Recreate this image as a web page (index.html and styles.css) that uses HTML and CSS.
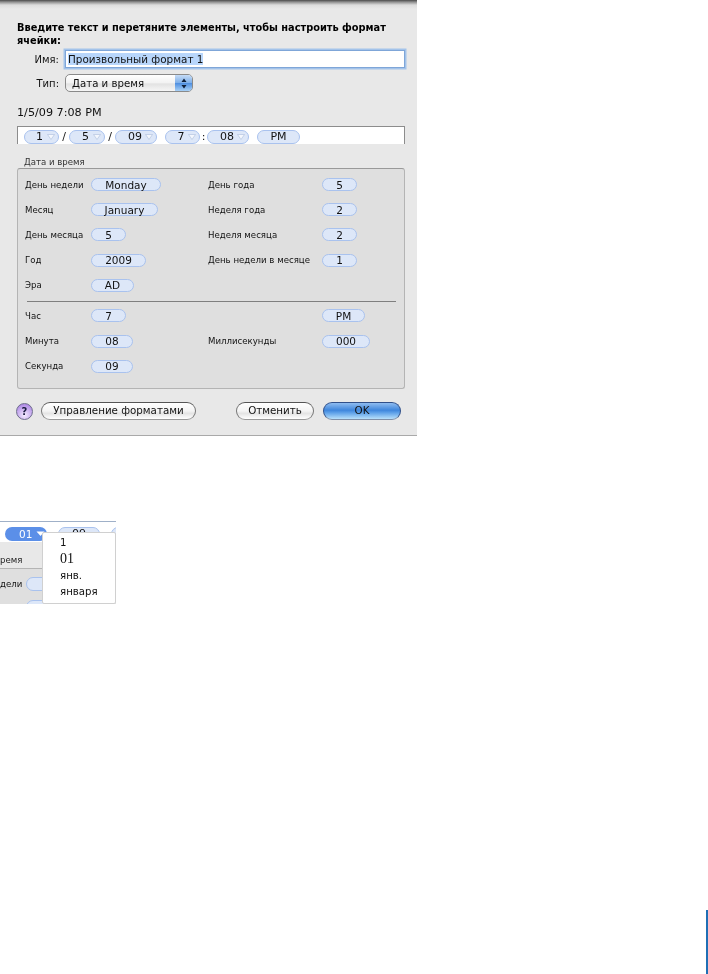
FILE: index.html
```html
<!DOCTYPE html>
<html lang="ru">
<head>
<meta charset="utf-8">
<title>Произвольный формат</title>
<link rel="stylesheet" href="styles.css">
</head>
<body>
<main class="page">
  <section class="dialog">
    <h1 class="heading">Введите текст и перетяните элементы, чтобы настроить формат ячейки:</h1>
    <div class="form-row name-row">
      <span class="form-label">Имя:</span>
      <div class="input"><span class="selected">Произвольный формат 1</span></div>
    </div>
    <div class="form-row type-row">
      <span class="form-label">Тип:</span>
      <div class="select">
        <span class="select-text">Дата и время</span>
        <span class="select-arrows">
          <svg width="12" height="15" viewBox="0 0 12 15"><path d="M6 2.5 8.5 6h-5zM6 12.5 3.5 9h5z" fill="#10203a"/></svg>
        </span>
      </div>
    </div>
    <p class="sample">1/5/09 7:08 PM</p>
    <div class="tokens">
      <span class="token t1 p4">1<svg class="chev" width="8" height="6" viewBox="0 0 8 6"><path d="M.5.5h7L4 5.5z" fill="#f4f7fd" stroke="#b4c4e0" stroke-width=".7"/></svg></span>
      <span class="sep">/</span>
      <span class="token t1 p2">5<svg class="chev" width="8" height="6" viewBox="0 0 8 6"><path d="M.5.5h7L4 5.5z" fill="#f4f7fd" stroke="#b4c4e0" stroke-width=".7"/></svg></span>
      <span class="sep">/</span>
      <span class="token t2">09<svg class="chev" width="8" height="6" viewBox="0 0 8 6"><path d="M.5.5h7L4 5.5z" fill="#f4f7fd" stroke="#b4c4e0" stroke-width=".7"/></svg></span>
      <span class="token t1 gap-left">7<svg class="chev" width="8" height="6" viewBox="0 0 8 6"><path d="M.5.5h7L4 5.5z" fill="#f4f7fd" stroke="#b4c4e0" stroke-width=".7"/></svg></span>
      <span class="sep sep-colon">:</span>
      <span class="token t2">08<svg class="chev" width="8" height="6" viewBox="0 0 8 6"><path d="M.5.5h7L4 5.5z" fill="#f4f7fd" stroke="#b4c4e0" stroke-width=".7"/></svg></span>
      <span class="token t3 gap-left">PM</span>
    </div>
    <h2 class="group-title">Дата и время</h2>
    <div class="panel">
      <div class="grid">
        <span class="label">День недели</span><span><span class="pill w70">Monday</span></span>
        <span class="label">День года</span><span><span class="pill w35">5</span></span>
        <span class="label">Месяц</span><span><span class="pill w67">January</span></span>
        <span class="label">Неделя года</span><span><span class="pill w35">2</span></span>
        <span class="label">День месяца</span><span><span class="pill w35">5</span></span>
        <span class="label">Неделя месяца</span><span><span class="pill w35">2</span></span>
        <span class="label">Год</span><span><span class="pill w55">2009</span></span>
        <span class="label">День недели в месяце</span><span><span class="pill w35">1</span></span>
        <span class="label">Эра</span><span><span class="pill w43">AD</span></span>
        <span></span><span></span>
      </div>
      <hr class="divider">
      <div class="grid">
        <span class="label">Час</span><span><span class="pill w35">7</span></span>
        <span class="label"></span><span><span class="pill w43">PM</span></span>
        <span class="label">Минута</span><span><span class="pill w42">08</span></span>
        <span class="label">Миллисекунды</span><span><span class="pill w48">000</span></span>
        <span class="label">Секунда</span><span><span class="pill w42">09</span></span>
        <span></span><span></span>
      </div>
    </div>
    <div class="actions">
      <span class="help">?</span>
      <button class="btn manage">Управление форматами</button>
      <span class="spacer"></span>
      <button class="btn cancel">Отменить</button>
      <button class="btn ok">OK</button>
    </div>
  </section>
  <figure class="crop">
    <div class="crop-strip">
      <span class="token-active">01<svg width="9" height="6" viewBox="0 0 9 6"><path d="M.5.5h8L4.5 5z" fill="#fff"/></svg></span>
      <span class="token crop-next">09</span>
      <span class="token crop-last"></span>
    </div>
    <div class="crop-body">
      <span class="crop-title">ремя</span>
      <div class="crop-row"><span class="crop-label">дели</span><span class="crop-pill"></span></div>
      <span class="crop-pill crop-pill2"></span>
    </div>
    <ul class="menu">
      <li>1</li>
      <li class="menu-big">01</li>
      <li>янв.</li>
      <li>января</li>
    </ul>
  </figure>
  <div class="page-rule"></div>
</main>
</body>
</html>
```
FILE: styles.css
```css
* { box-sizing: border-box; }
html, body { margin: 0; padding: 0; background: #fff; }
body { width: 708px; height: 974px; overflow: hidden; }
.page {
  position: relative;
  width: 708px;
  height: 974px;
  font-family: "DejaVu Sans", sans-serif;
  color: #111;
}
.dialog {
  width: 417px;
  height: 436px;
  background: linear-gradient(#4a4a4a 0, #8f8f8f 2px, #dcdcdc 5px, #e8e8e8 9px);
  border-bottom: 1px solid #a9a9a9;
  padding: 21px 12px 0 17px;
  display: flex;
  flex-direction: column;
  filter: blur(.35px);
}
.heading {
  margin: 0;
  font-size: 9.8px;
  line-height: 13px;
  font-weight: 700;
  color: #000;
}
.form-row { display: flex; align-items: center; }
.form-label {
  width: 42px;
  text-align: right;
  font-size: 10px;
  margin-right: 6px;
  color: #111;
}
.name-row { margin-top: 3px; height: 18px; }
.input {
  width: 340px;
  height: 18px;
  background: #fff;
  border: 1px solid #7fa6d8;
  box-shadow: 0 0 0 1.5px #a3c3ea;
  padding: 0 2px;
  font-size: 10.4px;
  line-height: 16px;
}
.selected { background: #b8d6fb; }
.type-row { margin-top: 6px; height: 18px; }
.select {
  width: 128px;
  height: 18px;
  border: 1px solid #8a8a8a;
  border-radius: 5px;
  background: linear-gradient(#fff, #f2f2f2 50%, #e2e2e2 55%, #f6f6f6);
  display: flex;
  justify-content: space-between;
  overflow: hidden;
  font-size: 10.2px;
  line-height: 17px;
}
.select-text { padding-left: 6px; }
.select-arrows {
  width: 17px;
  display: flex;
  align-items: center;
  justify-content: center;
  background: linear-gradient(#c6dcf6, #7fb0ea 48%, #4f8fe0 52%, #a8d0f6);
}
.sample { margin: 14px 0 0; font-size: 11.2px; line-height: 14px; color: #111; }
.tokens {
  width: 388px;
  height: 18px;
  margin-top: 6px;
  background: #fff;
  border: 1px solid #8c8c8c;
  border-bottom: 0;
  display: flex;
  align-items: center;
  padding: 2px 0 0 6px;
  font-size: 11px;
}
.token {
  height: 14px;
  background: #dde7f8;
  border: 1px solid #a9c2ee;
  border-radius: 7px;
  display: inline-flex;
  align-items: center;
  justify-content: center;
  position: relative;
  line-height: 12px;
  color: #111;
}
.t1 { width: 35px; padding-right: 3px; }
.t1.p4 { padding-right: 4px; }
.t1.p2 { padding-right: 3px; width: 36px; }
.t2 { width: 42px; padding-right: 2px; }
.t3 { width: 43px; }
.chev { position: absolute; right: 3px; top: 3px; }
.sep { width: 10px; text-align: center; font-size: 11px; }
.sep-colon { width: 7px; }
.gap-left { margin-left: 8px; }
.group-title {
  margin: 12px 0 0 7px;
  font-size: 8.6px;
  line-height: 12px;
  font-weight: 400;
  color: #333;
}
.panel {
  width: 388px;
  height: 221px;
  background: #dfdfdf;
  border: 1px solid #b4b4b4;
  border-top-color: #999;
  border-radius: 3px;
  padding: 3px 7px 0 7px;
}
.grid {
  display: grid;
  grid-template-columns: 66px 117px 114px 1fr;
  grid-auto-rows: 25.2px;
  font-size: 8.6px;
}
.grid > span { display: flex; align-items: center; }
.label { color: #111; white-space: nowrap; }
.pill {
  height: 13px;
  background: #dde7f8;
  border: 1px solid #a9c2ee;
  border-radius: 7px;
  display: flex;
  align-items: center;
  justify-content: center;
  font-size: 10.5px;
  color: #111;
}
.w35 { width: 35px; }
.w42 { width: 42px; }
.w43 { width: 43px; }
.w48 { width: 48px; }
.w55 { width: 55px; }
.w67 { width: 67px; }
.w70 { width: 70px; }
.divider {
  margin: 3px 1px 1.4px 2px;
  height: 1px;
  border: 0;
  background: #7f7f7f;
}
.actions {
  display: flex;
  align-items: center;
  width: 385px;
  height: 18px;
  margin-top: 13px;
  margin-left: -1px;
}
.help {
  width: 17px;
  height: 17px;
  border-radius: 50%;
  border: 1px solid #6e6e8c;
  background: radial-gradient(circle at 50% 75%, #f4ecff, #b08ae6 80%);
  font-size: 10px;
  font-weight: 700;
  line-height: 15px;
  text-align: center;
  color: #1a1a40;
}
.btn {
  height: 18px;
  padding: 0 0 2px;
  border: 1px solid #777;
  border-top-color: #555;
  border-bottom-color: #999;
  border-radius: 9px;
  background: linear-gradient(#fff, #f4f4f4 50%, #e4e4e4 65%, #fff);
  font-family: inherit;
  font-size: 10.3px;
  color: #111;
}
.manage { width: 155px; margin-left: 8px; }
.spacer { flex: 1; }
.cancel { width: 78px; }
.ok {
  width: 78px;
  margin-left: 9px;
  border-color: #30508a #30508a #7f8fa8;
  background: linear-gradient(#8fbcf0, #3f86dc 45%, #5c9fe8 60%, #b8e0fb);
}
.crop {
  position: relative;
  width: 116px;
  height: 83px;
  margin: 85px 0 0;
  overflow: hidden;
  background: #dfdfdf;
  font-size: 8.6px;
  filter: blur(.35px);
}
.crop-strip {
  height: 21px;
  background: #fff;
  border-top: 1px solid #9fb0c8;
  display: flex;
  gap: 11px;
  padding: 5px 0 0 5px;
}
.token-active {
  flex: none;
  width: 42px;
  height: 14px;
  background: #5b8fe8;
  border-radius: 7px;
  color: #fff;
  font-size: 10.5px;
  line-height: 14px;
  display: flex;
  align-items: center;
  gap: 4px;
  padding-left: 14px;
}
.crop-next { width: 42px; flex: none; font-size: 11px; }
.crop-last { width: 30px; flex: none; }
.crop-body {
  height: 62px;
  background: linear-gradient(#e8e8e8 0 26px, #b4b4b4 26px 27px, #dfdfdf 27px);
  padding-top: 12px;
}
.crop-title { display: block; line-height: 12px; color: #222; }
.crop-row { display: flex; align-items: center; margin-top: 11px; }
.crop-label { width: 26px; color: #111; }
.crop-pill {
  display: block;
  width: 40px;
  height: 14px;
  background: #dde7f8;
  border: 1px solid #a9c2ee;
  border-radius: 7px;
}
.crop-pill2 { margin: 9px 0 0 26px; }
.menu {
  position: absolute;
  left: 42px;
  top: 11px;
  width: 74px;
  height: 72px;
  margin: 0;
  padding: 2px 0 0 17px;
  list-style: none;
  background: #fff;
  border: 1px solid #d0d0d0;
  border-radius: 2px;
  font-size: 10.2px;
  line-height: 16.3px;
  color: #111;
}
.menu-big { font-family: "Liberation Serif", serif; font-size: 14px; }
.page-rule {
  position: absolute;
  left: 706px;
  top: 910px;
  width: 2px;
  height: 64px;
  background: #1f6fb5;
}
```
